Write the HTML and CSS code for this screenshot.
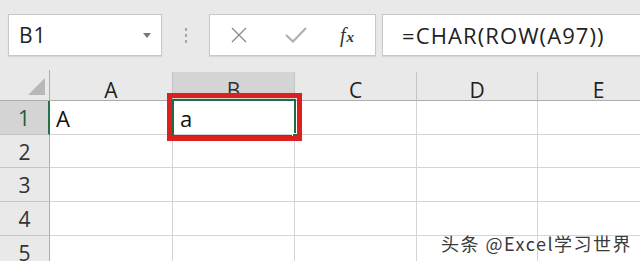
FILE: index.html
```html
<!DOCTYPE html>
<html lang="zh">
<head>
    <meta charset="UTF-8">
    <title>Excel CHAR ROW</title>
    <link rel="stylesheet" href="styles.css">
</head>
<body>

    <div class="toolbar">
        <div class="name-box">
            <span class="name-text">B1</span>
            <span class="name-arrow"></span>
        </div>
        <div class="grip">
            <span></span><span></span><span></span>
        </div>
        <div class="fx-box">
            <svg class="icon-x" width="16" height="16" viewBox="0 0 16 16">
                <path d="M1 1 L15 15 M15 1 L1 15" stroke="#8a8a8a" stroke-width="1.3" fill="none"/>
            </svg>
            <svg class="icon-check" width="22" height="16" viewBox="0 0 22 16">
                <path d="M1 8 L8 14.5 L21 1" stroke="#b0b0b0" stroke-width="2.2" fill="none"/>
            </svg>
            <span class="icon-fx"><i>f</i><i class="sub">x</i></span>
        </div>
        <div class="formula-box">=CHAR(ROW(A97))</div>
    </div>

    <div class="sheet">
        <div class="corner"><span class="corner-tri"></span></div>
        <div class="col-head">A</div>
        <div class="col-head active">B</div>
        <div class="col-head">C</div>
        <div class="col-head">D</div>
        <div class="col-head">E</div>

        <div class="row-head active">1</div>
        <div class="cell">A</div>
        <div class="cell selected">a</div>
        <div class="cell"></div>
        <div class="cell"></div>
        <div class="cell"></div>

        <div class="row-head">2</div>
        <div class="cell"></div>
        <div class="cell"></div>
        <div class="cell"></div>
        <div class="cell"></div>
        <div class="cell"></div>

        <div class="row-head">3</div>
        <div class="cell"></div>
        <div class="cell"></div>
        <div class="cell"></div>
        <div class="cell"></div>
        <div class="cell"></div>

        <div class="row-head">4</div>
        <div class="cell"></div>
        <div class="cell"></div>
        <div class="cell"></div>
        <div class="cell"></div>
        <div class="cell"></div>

        <div class="row-head">5</div>
        <div class="cell"></div>
        <div class="cell"></div>
        <div class="cell"></div>
        <div class="cell"></div>
        <div class="cell"></div>

        <div class="select-frame"><span class="fill-handle"></span></div>
        <div class="red-mark"></div>
    </div>

    <div class="watermark">头条 @Excel学习世界</div>

</body>
</html>
```

FILE: styles.css
```css
body {
    margin: 0;
    padding: 0;
    width: 640px;
    height: 261px;
    overflow: hidden;
    background-color: #e9e9e9;
    font-family: "Open Sans", "Noto Sans", "Noto Sans CJK SC", sans-serif;
    position: relative;
}

.toolbar {
    display: flex;
    align-items: center;
    height: 42px;
    padding: 14px 0 14px 8px;
}

.name-box,
.fx-box,
.formula-box {
    height: 42px;
    box-sizing: border-box;
    background-color: #ffffff;
    border: 1px solid #c8c8c8;
    box-shadow: 0 1px 1px rgba(0, 0, 0, 0.08);
}

.name-box {
    width: 154px;
    display: flex;
    align-items: center;
    justify-content: space-between;
    padding: 0 10px 0 10px;
}

.name-text {
    font-size: 21px;
    color: #222;
    letter-spacing: 1px;
}

.name-arrow {
    width: 0;
    height: 0;
    border-left: 4px solid transparent;
    border-right: 4px solid transparent;
    border-top: 5px solid #777;
}

.grip {
    width: 47px;
    display: flex;
    flex-direction: column;
    align-items: center;
    gap: 3px;
}

.grip span {
    width: 2px;
    height: 3px;
    background-color: #a4a4a4;
}

.fx-box {
    width: 167px;
    display: flex;
    align-items: center;
    padding-left: 21px;
}

.icon-x {
    margin-right: 38px;
}

.icon-check {
    margin-right: 33px;
}

.icon-fx {
    font-family: "Liberation Serif", serif;
    font-size: 20px;
    color: #333;
}

.icon-fx .sub {
    font-size: 15px;
    margin-left: 1px;
    font-weight: bold;
}

.formula-box {
    flex: 1;
    margin-left: 6px;
    margin-right: -10px;
    padding-left: 19px;
    font-size: 22px;
    letter-spacing: 1.1px;
    line-height: 40px;
    color: #222;
}

.sheet {
    display: grid;
    grid-template-columns: 50px 123px 122px 122px 121px 122px;
    grid-template-rows: 31px 34px 33px 34px 34px 34px;
    position: relative;
}

.corner,
.col-head,
.row-head,
.cell {
    box-sizing: border-box;
}

.corner {
    position: relative;
    border-right: 1px solid #adadad;
    border-bottom: 1px solid #adadad;
}

.corner-tri {
    position: absolute;
    right: 4px;
    bottom: 5px;
    width: 0;
    height: 0;
    border-left: 17px solid transparent;
    border-bottom: 17px solid #b8b8b8;
}

.col-head {
    background-color: #e9e9e9;
    border-bottom: 1px solid #adadad;
    border-right: 1px solid #c4c4c4;
    font-size: 21px;
    color: #222;
    text-align: center;
    line-height: 36px;
    margin-top: 2px;
}

.col-head.active {
    background-color: #d4d4d4;
    color: #333;
}

.row-head {
    background-color: #e9e9e9;
    border-right: 1px solid #adadad;
    border-bottom: 1px solid #c4c4c4;
    font-size: 21px;
    color: #333;
    text-align: center;
    line-height: 34px;
}

.row-head.active {
    background-color: #d4d4d4;
    border-right: 2px solid #217346;
    color: #215c3a;
}

.cell {
    background-color: #ffffff;
    border-right: 1px solid #d4d4d4;
    border-bottom: 1px solid #d4d4d4;
    font-size: 22px;
    color: #111;
    line-height: 34px;
    padding-left: 6px;
}

.cell.selected {
    padding-left: 7px;
}

.select-frame {
    position: absolute;
    left: 172px;
    top: 29px;
    width: 124px;
    height: 38px;
    box-sizing: border-box;
    border: 2px solid #1f6b42;
}

.fill-handle {
    position: absolute;
    right: -5px;
    bottom: -5px;
    width: 5px;
    height: 5px;
    background-color: #1f6b42;
    border: 1px solid #ffffff;
}

.red-mark {
    position: absolute;
    left: 167px;
    top: 23px;
    width: 135px;
    height: 48px;
    box-sizing: border-box;
    border: 5px solid #dc1f1f;
}

.watermark {
    position: absolute;
    right: 8px;
    bottom: 5px;
    font-family: "Noto Sans CJK SC", "Noto Sans", sans-serif;
    font-size: 18px;
    letter-spacing: 1.5px;
    color: #3a3a3a;
    text-shadow: 0 0 2px #ffffff, 0 0 2px #ffffff;
}
```
